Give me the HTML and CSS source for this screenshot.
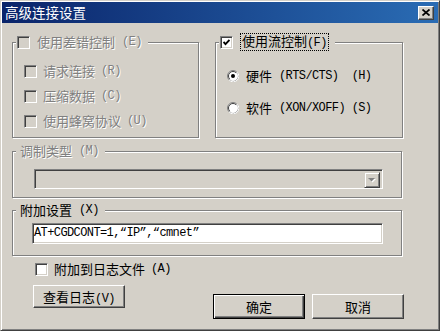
FILE: index.html
```html
<!DOCTYPE html>
<html lang="zh-CN">
<head>
    <meta charset="UTF-8">
    <title>高级连接设置</title>
    <link rel="stylesheet" href="styles.css">
</head>
<body>
    <div class="window">
        <div class="titlebar">
            <span class="title">高级连接设置</span>
            <span class="close-btn">
                <svg width="8" height="7" viewBox="0 0 8 7"><path d="M0.5 0.5 L7.5 6.5 M7.5 0.5 L0.5 6.5" stroke="#000" stroke-width="1.7" fill="none"/></svg>
            </span>
        </div>

        <div class="content">
            <div class="top-groups">
                <fieldset class="group">
                    <legend><span class="legend-inner disabled"><span class="check off"></span>使用差错控制<span class="en">(E)</span></span></legend>
                    <div class="options">
                        <div class="row disabled"><span class="check off"></span>请求连接<span class="en">(R)</span></div>
                        <div class="row disabled"><span class="check off"></span>压缩数据<span class="en">(C)</span></div>
                        <div class="row disabled"><span class="check off"></span>使用蜂窝协议<span class="en">(U)</span></div>
                    </div>
                </fieldset>

                <fieldset class="group group-right">
                    <legend><span class="legend-inner"><span class="check"><svg width="7" height="7" viewBox="0 0 7 7"><path d="M0.5 3 L2.5 5.2 L6.5 1" stroke="#000" stroke-width="1.9" fill="none"/></svg></span><span class="focus">使用流控制<span class="en">(F)</span></span></span></legend>
                    <div class="options radios">
                        <div class="row">
                            <svg class="radio" width="12" height="12" viewBox="0 0 12 12">
                                <circle cx="6" cy="6" r="5.5" fill="#fff" stroke="#808080"/>
                                <path d="M10.2 2.2 A5.5 5.5 0 0 1 2.2 10.2" stroke="#fff" fill="none"/>
                                <path d="M2.8 9.2 A4.5 4.5 0 0 1 9.2 2.8" stroke="#404040" fill="none"/>
                                <circle cx="6" cy="6" r="2" fill="#000"/>
                            </svg>
                            硬件<span class="en">(RTS/CTS)&nbsp;&nbsp;(H)</span>
                        </div>
                        <div class="row">
                            <svg class="radio" width="12" height="12" viewBox="0 0 12 12">
                                <circle cx="6" cy="6" r="5.5" fill="#fff" stroke="#808080"/>
                                <path d="M10.2 2.2 A5.5 5.5 0 0 1 2.2 10.2" stroke="#fff" fill="none"/>
                                <path d="M2.8 9.2 A4.5 4.5 0 0 1 9.2 2.8" stroke="#404040" fill="none"/>
                            </svg>
                            软件<span class="en">(XON/XOFF)&nbsp;(S)</span>
                        </div>
                    </div>
                </fieldset>
            </div>

            <fieldset class="group wide">
                <legend class="text-legend"><span class="legend-inner disabled">调制类型<span class="en">(M)</span></span></legend>
                <div class="combo">
                    <span class="combo-btn">
                        <svg width="8" height="5" viewBox="0 0 8 5"><path d="M1 1 H8 L4.5 4.5 Z" fill="#fff"/><path d="M0 0 H7 L3.5 3.5 Z" fill="#808080"/></svg>
                    </span>
                </div>
            </fieldset>

            <fieldset class="group wide extra">
                <legend class="text-legend"><span class="legend-inner">附加设置<span class="en">(X)</span></span></legend>
                <div class="textbox">AT+CGDCONT=1,“IP”,“cmnet”</div>
            </fieldset>

            <div class="row log-row"><span class="check"></span>附加到日志文件<span class="en">(A)</span></div>

            <div class="button-row">
                <button class="btn view-btn">查看日志<span class="en">(V)</span></button>
                <div class="dialog-buttons">
                    <button class="btn default-btn">确定</button>
                    <button class="btn">取消</button>
                </div>
            </div>
        </div>
    </div>
</body>
</html>
```

FILE: styles.css
```css
body {
    margin: 0;
    background: #d4d0c8;
    font-family: "Noto Sans CJK SC", "Liberation Sans", sans-serif;
    font-size: 13px;
    color: #000;
}
.window {
    width: 440px;
    height: 331px;
    box-sizing: border-box;
    padding: 1px;
    border: 1px solid;
    border-color: #d4d0c8 #404040 #404040 #d4d0c8;
    box-shadow: inset 1px 1px #fff, inset -1px -1px #808080;
    background: #d4d0c8;
}
.titlebar {
    height: 21px;
    display: flex;
    align-items: center;
    justify-content: space-between;
    padding: 0 4px 0 3px;
    background: linear-gradient(to right, #0a246a, #2a6cb4);
    color: #fff;
}
.title {
    font-size: 13.5px;
    line-height: 21px;
}
.close-btn {
    width: 16px;
    height: 14px;
    box-sizing: border-box;
    background: #d4d0c8;
    border: 1px solid;
    border-color: #fff #404040 #404040 #fff;
    box-shadow: inset -1px -1px #808080;
    display: flex;
    align-items: center;
    justify-content: center;
}
.en {
    font-family: "Liberation Mono", monospace;
    font-size: 12px;
    letter-spacing: -0.6px;
}
.content {
    width: 392px;
    padding: 11px 0 0 10px;
}
.top-groups {
    display: flex;
    gap: 16px;
}
.group {
    margin: 0;
    padding: 0;
    min-width: 0;
    border: 1px solid #808080;
    box-shadow: inset 1px 1px #fff, 1px 1px #fff;
}
.top-groups .group {
    width: 187px;
    box-sizing: border-box;
}
.top-groups .group-right {
    width: 188px;
}
legend {
    margin-left: 3px;
    padding: 0 6px 0 1px;
    background: #d4d0c8;
}
legend.text-legend {
    padding-left: 4px;
}
.legend-inner {
    display: flex;
    align-items: center;
    gap: 7px;
    height: 16px;
    line-height: 16px;
}
.disabled {
    color: #808080;
    text-shadow: 1px 1px 0 #fff;
}
.focus {
    border: 1px dotted #000;
    line-height: 14px;
    padding: 0 1px;
}
.check {
    width: 13px;
    height: 13px;
    box-sizing: border-box;
    flex: none;
    border: 1px solid;
    border-color: #808080 #fff #fff #808080;
    box-shadow: inset 1px 1px #404040, inset -1px -1px #d4d0c8;
    background: #fff;
    display: flex;
    align-items: center;
    justify-content: center;
}
.check.off {
    background: #d4d0c8;
}
.options {
    display: flex;
    flex-direction: column;
    gap: 9px;
    padding: 13px 0 8px 11px;
}
.radios {
    gap: 16px;
    padding-top: 18px;
    padding-left: 11px;
}
.row {
    display: flex;
    align-items: center;
    gap: 6px;
    height: 16px;
    line-height: 16px;
}
.radios .row {
    gap: 7px;
}
.radio {
    flex: none;
}
.wide {
    width: 390px;
    box-sizing: border-box;
    margin-top: 5px;
}
.wide.extra {
    margin-top: 4px;
}
.combo {
    height: 20px;
    box-sizing: border-box;
    margin: 10px 18px 8px 21px;
    padding: 2px;
    border: 1px solid;
    border-color: #808080 #fff #fff #808080;
    box-shadow: inset 1px 1px #404040, inset -1px -1px #d4d0c8;
    background: #d4d0c8;
    display: flex;
    justify-content: flex-end;
}
.combo-btn {
    width: 16px;
    height: 16px;
    box-sizing: border-box;
    border: 1px solid;
    border-color: #d4d0c8 #404040 #404040 #d4d0c8;
    box-shadow: inset 1px 1px #fff, inset -1px -1px #808080;
    display: flex;
    align-items: center;
    justify-content: center;
}
.textbox {
    height: 21px;
    box-sizing: border-box;
    margin: 5px 18px 11px 19px;
    padding: 0 1px;
    border: 1px solid;
    border-color: #808080 #fff #fff #808080;
    box-shadow: inset 1px 1px #404040, inset -1px -1px #d4d0c8;
    background: #fff;
    font-family: "Liberation Mono", monospace;
    font-size: 12px;
    letter-spacing: -0.6px;
    line-height: 19px;
}
.log-row {
    margin: 5px 0 0 23px;
}
.button-row {
    display: flex;
    align-items: flex-start;
    margin-top: 8px;
}
.btn {
    width: 92px;
    height: 25px;
    box-sizing: border-box;
    padding: 0;
    background: #d4d0c8;
    border: 1px solid;
    border-color: #fff #404040 #404040 #fff;
    box-shadow: inset -1px -1px #808080;
    font-family: inherit;
    font-size: 13px;
    color: #000;
}
.view-btn {
    height: 23px;
    margin-left: 21px;
}
.dialog-buttons {
    display: flex;
    gap: 7px;
    margin-left: auto;
    margin-top: 9px;
}
.default-btn {
    border-color: #000;
    box-shadow: inset 1px 1px #fff, inset -1px -1px #404040, inset -2px -2px #808080;
}
```
